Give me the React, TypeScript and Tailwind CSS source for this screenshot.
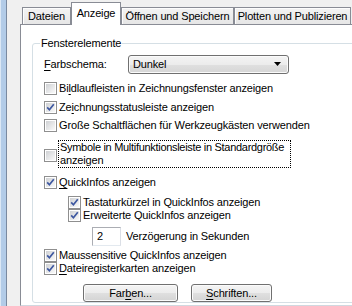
import React from 'react';

const Box: React.FC<{ checked?: boolean }> = ({ checked }) => (
  <span className="relative flex h-[13px] w-[13px] shrink-0 items-center justify-center border border-[#8f8f8f] bg-white">
    <span className="h-[9px] w-[9px] bg-gradient-to-br from-[#cfd1d4] to-[#fafafa]" />
    {checked && (
      <svg className="absolute left-[-1px] top-[-1px]" width="13" height="13" viewBox="0 0 13 13">
        <path d="M3.2 6.4 L5.4 8.8 L9.8 3.2" stroke="#3d57a0" strokeWidth="1.7" fill="none" />
      </svg>
    )}
  </span>
);

const Check: React.FC<{ checked?: boolean; className?: string; children: React.ReactNode }> = ({
  checked,
  className = '',
  children,
}) => (
  <div className={`flex h-[13px] items-center gap-[2px] ${className}`}>
    <Box checked={checked} />
    <span className="whitespace-nowrap">{children}</span>
  </div>
);

const Btn: React.FC<{ className?: string; children: React.ReactNode }> = ({ className = '', children }) => (
  <div
    className={`flex h-[18px] items-center justify-center rounded-[3px] border border-[#707070] bg-[linear-gradient(to_bottom,#f4f4f4_0%,#ececec_50%,#e0e0e0_50%,#d4d4d4_100%)] shadow-[inset_0_0_0_1px_#fbfbfb] ${className}`}
  >
    {children}
  </div>
);

const tabs = [
  { label: 'Dateien', w: 'w-[49px]' },
  { label: 'Anzeige', w: 'w-[50px]', active: true },
  { label: 'Öffnen und Speichern', w: 'w-[113px]' },
  { label: 'Plotten und Publizieren', w: 'w-[117px]' },
];

export default function App() {
  return (
    <div className="flex h-[306px] w-[352px] overflow-hidden bg-[#f0f0f0] font-['Liberation_Sans',Arial,sans-serif] text-[11px] leading-[13px] tracking-[-0.15px] text-black">
      {/* window frame */}
      <div className="w-[1px] shrink-0 bg-[#dce8f5]" />
      <div className="w-[5px] shrink-0 bg-[#b3cce8]" />
      <div className="w-[1px] shrink-0 bg-[#7a8aa0]" />
      <div className="w-[13px] shrink-0" />

      {/* the dialog continues past the right edge of the shot */}
      <div className="flex w-[372px] shrink-0 flex-col">
        {/* tab strip */}
        <div className="flex h-[24px] items-end bg-[#f0f0f0] pl-[2px]">
          {tabs.map((t) =>
            t.active ? (
              <div
                key={t.label}
                className={`relative z-10 -mb-[1px] flex h-[23px] ${t.w} shrink-0 justify-center border border-b-0 border-[#898c95] bg-white pt-[4px]`}
              >
                {t.label}
              </div>
            ) : (
              <div
                key={t.label}
                className={`flex h-[17px] ${t.w} shrink-0 items-center justify-center border border-b-0 border-[#898c95] bg-gradient-to-b from-[#f3f3f3] to-[#e6e6e6] shadow-[inset_1px_1px_0_#fdfdfd]`}
              >
                {t.label}
              </div>
            ),
          )}
        </div>

        {/* panel */}
        <div className="h-[282px] border-l border-t border-b border-[#898c95] border-b-[#d0d8e0] bg-white pl-[11px]">
          {/* group box */}
          <div className="relative mt-[18px] rounded-[3px] border border-[#d5dfe5] pl-[11px] pt-[5px]">
            <span className="absolute left-[7px] top-[-7px] bg-white px-[1px]">Fensterelemente</span>

            <div className="mt-[6px] flex h-[19px] items-center">
              <span className="w-[84px]">
                <span className="underline underline-offset-[2px]">F</span>arbschema:
              </span>
              <div className="flex h-[19px] w-[161px] items-center justify-between rounded-[3px] border border-[#707070] bg-[linear-gradient(to_bottom,#f4f4f4_0%,#ececec_50%,#e0e0e0_50%,#d6d6d6_100%)] pl-[4px] pr-[7px] shadow-[inset_0_0_0_1px_#fbfbfb]">
                <span>Dunkel</span>
                <svg width="7" height="4" viewBox="0 0 7 4" className="-mt-[2px]">
                  <path d="M0 0 H7 L3.5 4 Z" fill="#000" />
                </svg>
              </div>
            </div>

            <Check className="mt-[8px]">
              Bi<span className="underline underline-offset-[2px]">l</span>dlaufleisten in Zeichnungsfenster anzeigen
            </Check>
            <Check checked className="mt-[6px]">
              Ze<span className="underline underline-offset-[2px]">i</span>chnungsstatusleiste anzeigen
            </Check>
            <Check className="mt-[5px]">Große Schaltflächen für Werkzeugkästen verwenden</Check>

            <div className="mt-[8px] flex items-start gap-[1px]">
              <span className="mt-[9px]">
                <Box />
              </span>
              <div className="border border-dotted border-black pl-[1px] pr-[6px]">
                <div className="whitespace-nowrap tracking-[-0.3px]">Symbole in Multifunktionsleiste in Standardgröße</div>
                <div>anzeigen</div>
              </div>
            </div>

            <Check checked className="mt-[8px]">
              <span className="underline underline-offset-[2px]">Q</span>uickInfos anzeigen
            </Check>
            <div className="pl-[24px]">
              <Check checked className="mt-[7px]">
                Tastaturkürzel in QuickInfos anzeigen
              </Check>
              <Check checked>Erweiterte QuickInfos anzeigen</Check>
              <div className="mt-[5px] flex h-[19px] items-center pl-[24px]">
                <div className="flex h-[19px] w-[29px] items-center border border-[#abadb3] border-b-[#e3e9ef] border-r-[#dbdfe6] bg-white pl-[4px]">
                  2
                </div>
                <span className="ml-[5px]">Verzögerung in Sekunden</span>
              </div>
            </div>

            <Check checked className="mt-[3px]">
              Maussensitive QuickInfos anzeigen
            </Check>
            <Check checked>
              <span className="underline underline-offset-[2px]">D</span>ateiregisterkarten anzeigen
            </Check>

            <div className="mt-[9px] flex">
              <Btn className="ml-[39px] w-[95px]">
                <span>
                  Far<span className="underline underline-offset-[2px]">b</span>en...
                </span>
              </Btn>
              <Btn className="ml-[13px] w-[81px]">
                <span>
                  <span className="underline underline-offset-[2px]">S</span>chriften...
                </span>
              </Btn>
            </div>
          </div>
        </div>
      </div>
    </div>
  );
}
